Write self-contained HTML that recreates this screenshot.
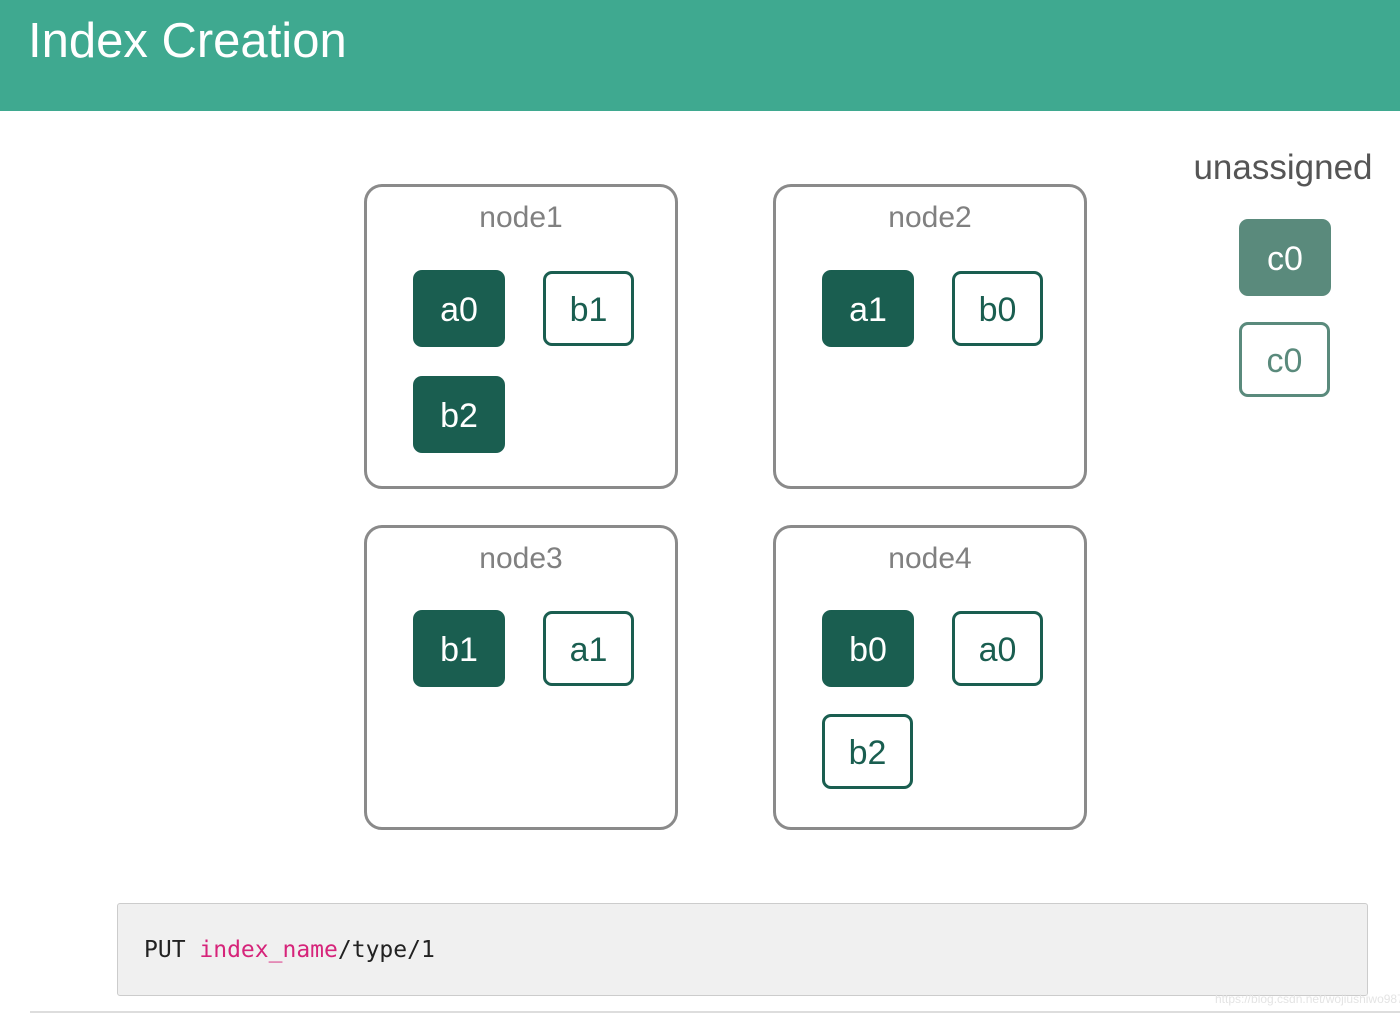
<!DOCTYPE html>
<html><head><meta charset="utf-8"><style>
*{margin:0;padding:0;box-sizing:border-box}
body{width:1400px;height:1013px;background:#fff;position:relative;overflow:hidden;font-family:"Liberation Sans",sans-serif}
.hdr{position:absolute;left:0;top:0;width:1400px;height:111px;background:#3fa990}
.hdr h1{position:absolute;left:28px;top:13px;font-weight:normal;color:#fff;font-size:49px;letter-spacing:0}
.node{position:absolute;width:314px;height:305px;border:3px solid #8a8a8a;border-radius:18px}
.node .t{position:absolute;left:0;right:0;top:14px;text-align:center;color:#808080;font-size:30px}
.s{position:absolute;width:92px;height:77px;border-radius:9px;display:flex;align-items:center;justify-content:center;font-size:34px;padding-top:4px}
.f{background:#1a5e50;color:#fff}
.o{border:3px solid #1a5e50;color:#1a5e50;background:#fff;width:91px;height:75px}
.code{position:absolute;left:117px;top:903px;width:1251px;height:93px;background:#f0f0f0;border:1px solid #ccc;border-radius:3px}
.code span.c{position:absolute;left:26px;top:33px;font-family:"DejaVu Sans Mono","Liberation Mono",monospace;font-size:23px;color:#222}
.pink{color:#d6247a}
</style></head><body>
<div class="hdr"><h1>Index Creation</h1></div>

<div class="node" style="left:364px;top:184px"><div class="t">node1</div></div>
<div class="node" style="left:773px;top:184px"><div class="t">node2</div></div>
<div class="node" style="left:364px;top:525px"><div class="t">node3</div></div>
<div class="node" style="left:773px;top:525px"><div class="t">node4</div></div>

<div class="s f" style="left:413px;top:270px">a0</div>
<div class="s o" style="left:543px;top:271px">b1</div>
<div class="s f" style="left:413px;top:376px">b2</div>

<div class="s f" style="left:822px;top:270px">a1</div>
<div class="s o" style="left:952px;top:271px">b0</div>

<div class="s f" style="left:413px;top:610px">b1</div>
<div class="s o" style="left:543px;top:611px">a1</div>

<div class="s f" style="left:822px;top:610px">b0</div>
<div class="s o" style="left:952px;top:611px">a0</div>
<div class="s o" style="left:822px;top:714px">b2</div>

<div style="position:absolute;left:1188px;top:148px;width:190px;text-align:center;font-size:35px;color:#555">unassigned</div>
<div class="s" style="left:1239px;top:219px;background:#5a8a7c;color:#fff">c0</div>
<div class="s" style="left:1239px;top:322px;width:91px;height:75px;border:3px solid #5a8a7c;color:#5a8a7c">c0</div>

<div class="code"><span class="c">PUT <span class="pink">index_name</span>/type/1</span></div>
<div style="position:absolute;left:1215px;top:992px;font-size:12px;color:#e4e4e4">https://blog.csdn.net/wojiushiwo987</div>
<div style="position:absolute;left:30px;top:1011px;width:1370px;height:2px;background:#ddd"></div>
</body></html>
